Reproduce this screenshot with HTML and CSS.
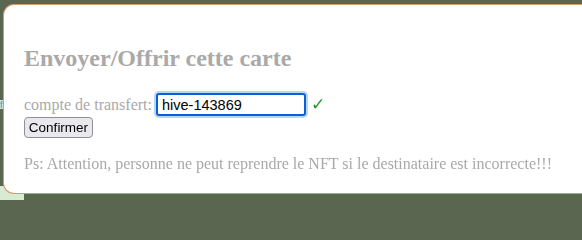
FILE: index.html
```html
<!DOCTYPE html>
<html lang="fr">
<head>
<meta charset="utf-8">
<link rel="stylesheet" href="styles.css">
</head>
<body>
<div class="bg-tab"><span>f</span></div>
<div class="bg-foot"></div>
<div class="modal">
  <h2 class="title">Envoyer/Offrir cette carte</h2>
  <div class="row">
    <label class="label" for="acc">compte de transfert:</label>
    <input id="acc" class="field" type="text" value="hive-143869" autofocus>
    <span class="check">✓</span>
  </div>
  <button class="btn" type="button">Confirmer</button>
  <p class="note">Ps: Attention, personne ne peut reprendre le NFT si le destinataire est incorrecte!!!</p>
</div>
</body>
</html>
```

FILE: styles.css
```css
html, body {
  margin: 0;
  padding: 0;
  width: 582px;
  height: 200px;
  overflow: hidden;
  background: #5b6650;
}
body {
  position: relative;
  font-family: "Liberation Serif", "Times New Roman", serif;
}
.bg-tab {
  position: absolute;
  left: 0;
  top: 100px;
  width: 3px;
  height: 9px;
  background: #cfe6e0;
  overflow: hidden;
  font: 9px "Liberation Sans", sans-serif;
  color: #3a8fb0;
}
.bg-foot {
  position: absolute;
  left: 0;
  top: 186px;
  width: 24px;
  height: 14px;
  background: #d8e9d4;
}
.modal {
  position: absolute;
  left: 3px;
  top: 4px;
  box-sizing: border-box;
  width: 579px;
  height: 190px;
  padding: 20px 0 0 20px;
  background: #fff;
  border: 1px solid #d39a6c;
  border-right: 0;
  border-radius: 11px 0 0 11px;
  color: #a9a9a9;
}
.title {
  margin: 20px 0 20px 0;
  font-size: 24px;
  font-weight: bold;
  color: #a9a9a9;
  line-height: 27px;
}
.row {
  display: flex;
  align-items: baseline;
  height: 25px;
  padding-top: 1px;
  box-sizing: border-box;
}
.label {
  font-size: 16px;
  color: #a9a9a9;
  margin-right: 4px;
}
.field {
  box-sizing: border-box;
  width: 150px;
  height: 23px;
  margin: 0;
  padding: 0 0 0 4px;
  border: 2px solid #0b5fd8;
  border-radius: 3px;
  box-shadow: 0 0 0 2px #b5d8f7;
  outline: none;
  font-family: "Liberation Sans", Arial, sans-serif;
  font-size: 14.5px;
  color: #000;
  background: #fff;
}
.check {
  margin-left: 5px;
  color: #1f9a2a;
  font-size: 17px;
  font-family: "DejaVu Sans", sans-serif;
}
.btn {
  display: block;
  box-sizing: border-box;
  width: 69px;
  height: 21px;
  margin: 0;
  padding: 0;
  background: #e9e9ed;
  border: 1px solid #8f8f9d;
  border-radius: 4px;
  font-family: "Liberation Sans", Arial, sans-serif;
  font-size: 13.5px;
  color: #000;
}
.note {
  margin: 17px 0 0 0;
  font-size: 16px;
  color: #a9a9a9;
  line-height: 18px;
}
```
